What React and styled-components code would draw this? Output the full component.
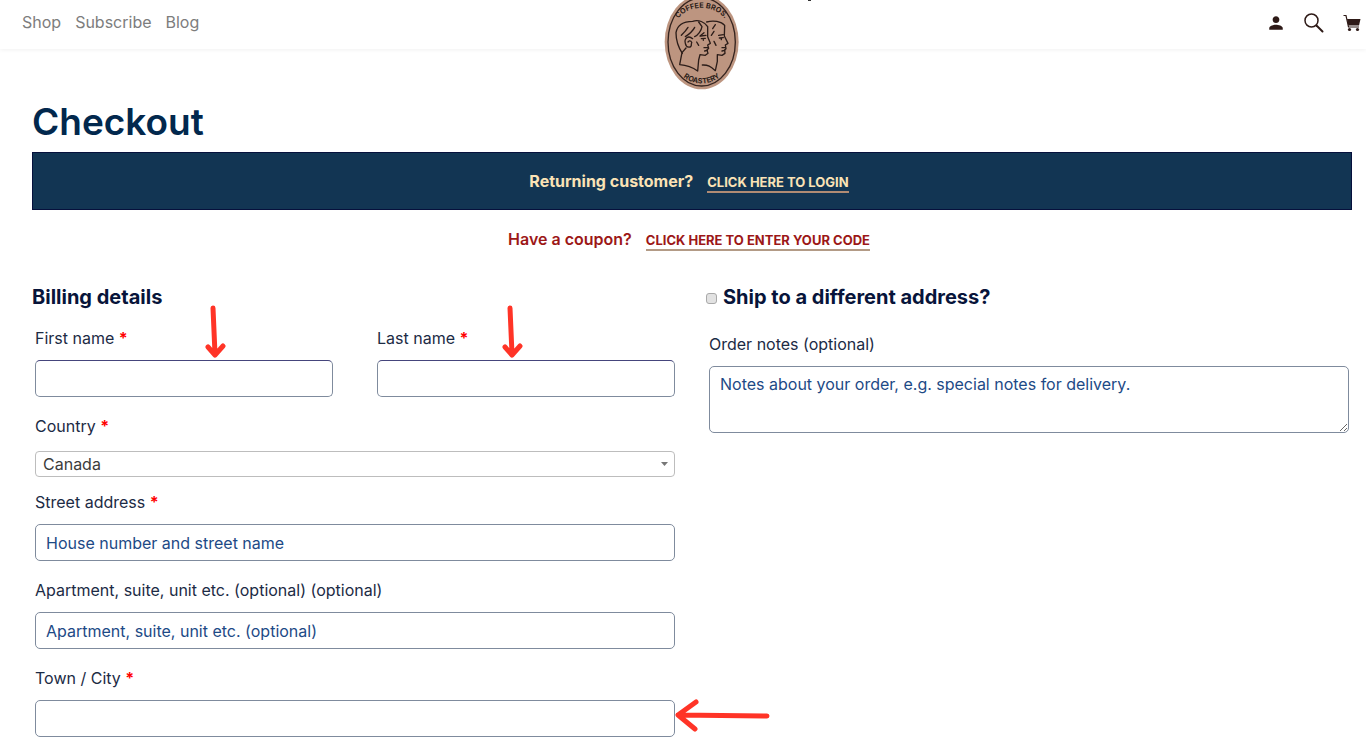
import { useState } from "react";
import styled, { createGlobalStyle, css } from "styled-components";
import { IoMdPerson } from "react-icons/io";

const GlobalStyle = createGlobalStyle`
  * {
    box-sizing: border-box;
  }

  body {
    margin: 0;
    background: #fff;
    color: #1c2b45;
    font-family: Inter, "Liberation Sans", sans-serif;
    font-size: 16px;
    line-height: 24px;
  }
`;

// header
const Header = styled.header`
  position: relative;
  display: flex;
  align-items: center;
  justify-content: space-between;
  height: 49px;
  padding: 0 5px 4px 22px;
  box-shadow: 0 1px 4px rgba(0, 0, 0, 0.06);
`;

const Nav = styled.nav`
  display: flex;
  gap: 14px;
  padding-bottom: 2px;

  a {
    color: #7d7d7d;
    text-decoration: none;
  }
`;

const LogoLink = styled.a`
  position: absolute;
  top: -6px;
  left: calc(50% - 19px);

  svg {
    display: block;
  }
`;

const Speck = styled.span`
  position: absolute;
  top: 0;
  left: calc(50% + 125px);
  width: 3px;
  height: 1px;
  background: #333;
`;

const Tools = styled.div`
  display: flex;
  align-items: center;
  gap: 19px;
`;

const IconButton = styled.button`
  display: flex;
  padding: 0;
  border: 0;
  background: none;
  color: #2e1a17;
  cursor: pointer;
`;

// page
const Page = styled.main`
  padding: 51px 14px 0 32px;
`;

const Title = styled.h1`
  margin: 0;
  color: #02284d;
  font-size: 37px;
  font-weight: 600;
  line-height: 44px;
`;

const Notice = styled.div`
  display: flex;
  align-items: center;
  justify-content: center;
  gap: 14px;
  height: 58px;
  padding-right: 6px;
  color: #9c1717;
  font-weight: 600;

  a {
    margin-top: 4px;
    border-bottom: 2px solid #b39b86;
    color: inherit;
    font-size: 13px;
    font-weight: 700;
    line-height: 17px;
    text-decoration: none;
    text-transform: uppercase;
  }

  ${({ $dark }) =>
    $dark &&
    css`
      margin-top: 8px;
      border: 1px solid #06103c;
      background: #123553;
      color: #fbe3b6;
      font-weight: 700;

      a {
        border-color: #b08b74;
      }
    `}
`;

const Form = styled.form`
  display: grid;
  grid-template-columns: 1fr 1fr;
  gap: 28px;
  padding-top: 16px;
`;

const Heading = styled.h3`
  display: flex;
  align-items: center;
  gap: 6px;
  margin: 0;
  color: #07143a;
  font-size: 20px;
  font-weight: 700;
  line-height: 26px;
`;

const Fields = styled.div`
  display: flex;
  flex-direction: column;
  gap: 17px;
  padding: ${({ $top }) => $top}px 3px 0;
`;

const Pair = styled.div`
  display: grid;
  grid-template-columns: 1fr 1fr;
  gap: 44px;
`;

const FieldBox = styled.div`
  position: relative;
  display: flex;
  flex-direction: column;
  gap: 10px;
`;

const SelectField = styled(FieldBox)`
  gap: 13px;
  margin-bottom: -4px;
`;

const Required = styled.span`
  color: #f00;
  font-weight: 700;
`;

const boxStyle = css`
  width: 100%;
  border: 1px solid #7f8b9d;
  border-radius: 5px;
  background: #fff;
  color: #1c2b45;
  font: inherit;
  outline: none;

  &::placeholder {
    color: #1d4a86;
    opacity: 1;
  }
`;

const Input = styled.input`
  ${boxStyle}
  height: 37px;
  padding: 0 10px;
  border-top-color: ${({ $strong }) => ($strong ? "#45457c" : "#7f8b9d")};
`;

const TextArea = styled.textarea`
  ${boxStyle}
  display: block;
  height: 67px;
  padding: 5px 10px;
  resize: vertical;
`;

const SelectWrap = styled.div`
  position: relative;

  svg {
    position: absolute;
    top: 11px;
    right: 7px;
    pointer-events: none;
  }
`;

const Select = styled.select`
  display: block;
  width: 100%;
  height: 26px;
  padding: 0 7px;
  border: 1px solid #bdbdbd;
  border-radius: 4px;
  background: #fff;
  color: #3c3c3c;
  font: inherit;
  appearance: none;
`;

const CheckBox = styled.input`
  width: 11px;
  height: 11px;
  margin: 2px 0 0;
  border: 1px solid #a9a9a9;
  border-radius: 3px;
  background: #e2e2e2;
  appearance: none;

  &:checked {
    background: #123553;
  }
`;

// arrows pointing at the mandatory boxes
const DownArrow = styled.svg`
  position: absolute;
  bottom: 38px;
  left: ${({ $left }) => $left};
`;

const LeftArrow = styled.svg`
  position: absolute;
  bottom: 3px;
  left: 100%;
`;

function PointDown({ left }) {
  return (
    <DownArrow
      $left={left}
      width="22"
      height="54"
      fill="none"
      stroke="#ff3427"
      strokeWidth="5"
      strokeLinecap="round"
      strokeLinejoin="round"
      aria-hidden="true"
    >
      <path d="M8 3 10 49M3 42 10 50 18 41" />
    </DownArrow>
  );
}

function PointLeft() {
  return (
    <LeftArrow
      width="97"
      height="36"
      fill="none"
      stroke="#ff3427"
      strokeWidth="5"
      strokeLinecap="round"
      strokeLinejoin="round"
      aria-hidden="true"
    >
      <path d="M92 18 3 17M21 4 3 17 20 31" />
    </LeftArrow>
  );
}

function Logo() {
  return (
    <svg width="76" height="96" viewBox="72 -18 228 288" role="img" aria-label="Coffee Bros. Roastery">
      <ellipse cx="185" cy="126" rx="111" ry="142" fill="#bd9580" />
      <ellipse cx="185" cy="126" rx="101" ry="132" fill="none" stroke="#35241f" strokeWidth="4" />
      <path id="logo-top" d="M108 70C132 8 236 8 262 70" fill="none" />
      <path id="logo-bottom" d="M112 212C146 263 226 263 258 210" fill="none" />
      <g fill="#2c1d19" fontFamily="Inter, sans-serif" fontWeight="700" fontSize="22">
        <text textAnchor="middle">
          <textPath href="#logo-top" startOffset="50%">COFFEE BROS.</textPath>
        </text>
        <text textAnchor="middle">
          <textPath href="#logo-bottom" startOffset="50%">ROASTERY</textPath>
        </text>
      </g>
      <g fill="none" stroke="#2c1d19" strokeWidth="4" strokeLinecap="round" strokeLinejoin="round">
        <path d="M127 160C114 140 108 120 108 98C112 74 132 64 158 64C176 58 194 66 203 80L203 110 211 130 203 135 206 145 201 150 204 160 196 166 180 164 176 180 173 213C156 201 140 196 119 194L126 158" />
        <path d="M200 66C220 60 244 64 254 76L253 108 264 130 256 135 258 146 254 150 255 160 246 166 232 164 232 184 226 212C212 200 204 194 187 195" />
        <path d="M124 106C132 98 138 92 144 82M136 110C148 102 158 94 164 82M164 110C174 106 184 92 186 80L176 66M180 108 192 98" />
        <path d="M158 116C144 104 132 116 136 130C138 144 156 146 154 132C158 126 150 118 144 126M138 144 126 158" />
        <path d="M182 108 198 106M184 116 196 115M190 116V121M170 126 176 136M192 143 204 143M194 153 202 151" />
        <path d="M218 86 226 74M214 106 222 94M236 106 250 104M238 114 250 113M244 114V119M222 124 228 136M246 143 256 143M246 153 254 151" />
      </g>
    </svg>
  );
}

function SearchIcon() {
  return (
    <svg width="20" height="20" fill="none" stroke="currentColor" strokeLinecap="round">
      <circle cx="7.500" cy="7.500" r="6.500" strokeWidth="1.500" />
      <path d="M12.500 12.500 18.500 18.500" strokeWidth="2" />
    </svg>
  );
}

function CartIcon() {
  return (
    <svg width="18" height="18" viewBox="0 0 18 18" fill="currentColor">
      <path d="M.5 1.500H3L5.500 13H16" fill="none" stroke="currentColor" strokeWidth="1.200" />
      <path d="M4 5H17.500L16 11.500H5.300z" />
      <circle cx="6.500" cy="15.500" r="1.600" />
      <circle cx="14.500" cy="15.500" r="1.600" />
    </svg>
  );
}

function Field({ id, label, required, placeholder, strong, children }) {
  return (
    <FieldBox>
      <label htmlFor={id}>
        {label} {required && <Required>*</Required>}
      </label>
      <Input id={id} type="text" placeholder={placeholder} $strong={strong} />
      {children}
    </FieldBox>
  );
}

function App() {
  const [country, setCountry] = useState("Canada");

  return (
    <>
      <GlobalStyle />
      <Header>
        <Nav>
          <a href="#shop">Shop</a>
          <a href="#subscribe">Subscribe</a>
          <a href="#blog">Blog</a>
        </Nav>
        <LogoLink href="#home">
          <Logo />
        </LogoLink>
        <Speck />
        <Tools>
          <IconButton aria-label="Account">
            <IoMdPerson size={18} />
          </IconButton>
          <IconButton aria-label="Search">
            <SearchIcon />
          </IconButton>
          <IconButton aria-label="Cart">
            <CartIcon />
          </IconButton>
        </Tools>
      </Header>

      <Page>
        <Title>Checkout</Title>
        <Notice $dark>
          <span>Returning customer?</span>
          <a href="#login">Click here to login</a>
        </Notice>
        <Notice>
          <span>Have a coupon?</span>
          <a href="#coupon">Click here to enter your code</a>
        </Notice>

        <Form>
          <section>
            <Heading>Billing details</Heading>
            <Fields $top={16}>
              <Pair>
                <Field id="first" label="First name" required strong>
                  <PointDown left="57%" />
                </Field>
                <Field id="last" label="Last name" required strong>
                  <PointDown left="42%" />
                </Field>
              </Pair>
              <SelectField>
                <label htmlFor="country">
                  Country <Required>*</Required>
                </label>
                <SelectWrap>
                  <Select
                    id="country"
                    value={country}
                    onChange={(e) => setCountry(e.target.value)}
                  >
                    <option>Canada</option>
                  </Select>
                  <svg width="7" height="4" fill="#777" aria-hidden="true">
                    <path d="M0 0H7L3.500 4z" />
                  </svg>
                </SelectWrap>
              </SelectField>
              <Field
                id="street"
                label="Street address"
                required
                placeholder="House number and street name"
              />
              <Field
                id="apartment"
                label="Apartment, suite, unit etc. (optional) (optional)"
                placeholder="Apartment, suite, unit etc. (optional)"
              />
              <Field id="city" label="Town / City" required>
                <PointLeft />
              </Field>
            </Fields>
          </section>

          <section>
            <Heading>
              <CheckBox id="ship" type="checkbox" />
              <label htmlFor="ship">Ship to a different address?</label>
            </Heading>
            <Fields $top={22}>
              <FieldBox>
                <label htmlFor="notes">Order notes (optional)</label>
                <TextArea
                  id="notes"
                  placeholder="Notes about your order, e.g. special notes for delivery."
                />
              </FieldBox>
            </Fields>
          </section>
        </Form>
      </Page>
    </>
  );
}

export default App;
